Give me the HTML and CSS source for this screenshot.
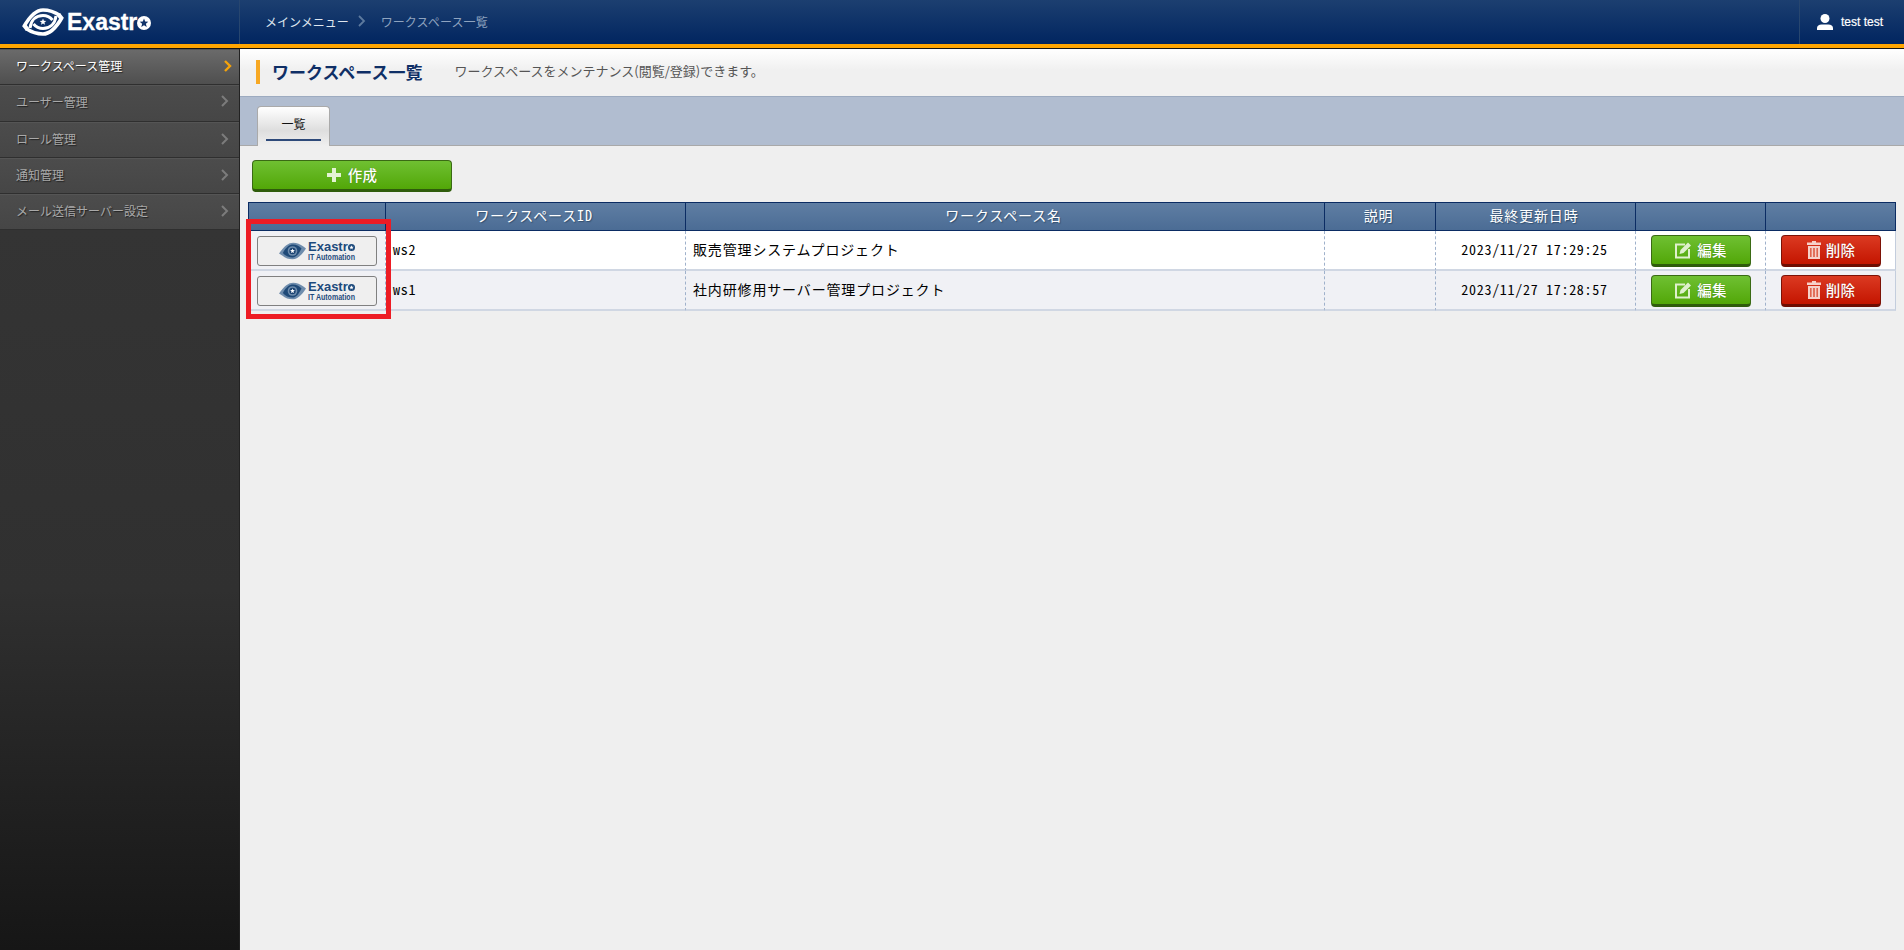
FILE: index.html
```html
<!DOCTYPE html>
<html lang="ja">
<head>
<meta charset="utf-8">
<title>ワークスペース一覧</title>
<link rel="stylesheet" href="styles.css">
</head>
<body>
<svg class="defs" width="0" height="0" aria-hidden="true">
  <defs>
    <symbol id="eye-line" viewBox="0 0 42 28">
      <g fill="none" stroke="#fff" stroke-linecap="butt">
        <path stroke-width="3.600" d="M2 18.500 C8 8 14 2 21 2 C27 2 32 3.500 38 7.500"/>
        <path stroke-width="3.600" d="M40 9.500 C34 20 28 26 21 26 C15 26 10 24.500 4 20.500"/>
        <path stroke-width="3" d="M8 20 C9 12 14 7.500 21 7.500 C25 7.500 28 9 30.500 12"/>
        <path stroke-width="3" d="M34 8 C33 16 28 20.500 21 20.500 C17 20.500 14 19 11.500 16"/>
      </g>
      <path fill="#fff" d="M0 18l4-2 3 4-3 3zM42 10l-4 2-3-4 3-3z"/>
      <polygon fill="#fff" points="21,10.500 21.900,12.800 24.300,13 22.400,14.500 23.100,16.800 21,15.500 18.900,16.800 19.600,14.500 17.700,13 20.100,12.800"/>
    </symbol>
    <symbol id="eye-fill" viewBox="0 0 42 28">
      <path fill="#6f8dad" d="M0 18 C8 6 15 1 22 1 C28 1 33 3 38 7 L42 10 C35 21 28 27 21 27 C15 27 10 25 5 21z"/>
      <path fill="#1f4a78" d="M6 17 C11 8 16 4 22 4 C27 4 31 6 35 10 C30 20 26 24 21 24 C15 24 10 22 6 17z"/>
      <circle cx="21" cy="14" r="7.500" fill="#6f8dad"/>
      <circle cx="21" cy="14" r="5" fill="#1a4372"/>
      <polygon fill="#fff" points="21,10 22,12.600 24.800,12.800 22.600,14.500 23.400,17.200 21,15.800 18.600,17.200 19.400,14.500 17.200,12.800 20,12.600"/>
    </symbol>
    <symbol id="star-white" viewBox="0 0 14 14">
      <circle cx="7" cy="7" r="7" fill="#fff"/>
      <polygon fill="#12346a" points="7,2.500 8.200,5.500 11.300,5.700 8.900,7.800 9.700,10.900 7,9.200 4.300,10.900 5.100,7.800 2.700,5.700 5.800,5.500"/>
    </symbol>
    <symbol id="star-navy" viewBox="0 0 14 14">
      <circle cx="7" cy="7" r="7" fill="#1d4a7c"/>
      <polygon fill="#fff" points="7,2.500 8.200,5.500 11.300,5.700 8.900,7.800 9.700,10.900 7,9.200 4.300,10.900 5.100,7.800 2.700,5.700 5.800,5.500"/>
    </symbol>
    <symbol id="ic-edit" viewBox="0 0 18 18">
      <path fill="none" stroke="#dff0cd" stroke-width="2" d="M11 3.500H2V16.500H15V8"/>
      <path fill="#dff0cd" d="M5.500 13l1-4L14 1.500 17 4.500 9.500 12z"/>
    </symbol>
    <symbol id="ic-trash" viewBox="0 0 14 18">
      <path fill="#f6d0c8" d="M5 0h4v1.500h5V4H0V1.500h5zM1 5h12v13H1z"/>
      <path fill="#d94a30" d="M3.200 7h1.300v9H3.200zM6.300 7h1.400v9H6.300zM9.500 7h1.300v9H9.500z"/>
    </symbol>
  </defs>
</svg>

<header class="topbar">
  <div class="brand">
    <svg class="brand-eye"><use href="#eye-line"/></svg>
    <span class="brand-name">Exastr</span>
    <svg class="brand-star"><use href="#star-white"/></svg>
  </div>
  <nav class="crumbs">
    <span class="crumb-link">メインメニュー</span>
    <svg class="crumb-sep" viewBox="0 0 8 12"><path d="M1 1l5 5-5 5" fill="none" stroke="#5d7a9e" stroke-width="1.800"/></svg>
    <span class="crumb-current">ワークスペース一覧</span>
  </nav>
  <div class="user">
    <svg class="user-icon" viewBox="0 0 16 16"><circle cx="8" cy="4.500" r="4.500" fill="#fff"/><path fill="#fff" d="M0 16v-2c0-2 2-3.500 4.500-3.500h7C14 10.500 16 12 16 14v2z"/></svg>
    <span>test test</span>
  </div>
</header>

<div class="layout">
  <aside class="sidebar">
    <a class="side-item is-active"><span>ワークスペース管理</span><svg class="chev" viewBox="0 0 8 12"><path d="M1 1l5 5-5 5" fill="none" stroke="#f5a30a" stroke-width="2.400"/></svg></a>
    <a class="side-item side-tall"><span>ユーザー管理</span><svg class="chev" viewBox="0 0 8 12"><path d="M1 1l5 5-5 5" fill="none" stroke="#7c7c7c" stroke-width="2"/></svg></a>
    <a class="side-item"><span>ロール管理</span><svg class="chev" viewBox="0 0 8 12"><path d="M1 1l5 5-5 5" fill="none" stroke="#7c7c7c" stroke-width="2"/></svg></a>
    <a class="side-item"><span>通知管理</span><svg class="chev" viewBox="0 0 8 12"><path d="M1 1l5 5-5 5" fill="none" stroke="#7c7c7c" stroke-width="2"/></svg></a>
    <a class="side-item"><span>メール送信サーバー設定</span><svg class="chev" viewBox="0 0 8 12"><path d="M1 1l5 5-5 5" fill="none" stroke="#7c7c7c" stroke-width="2"/></svg></a>
  </aside>

  <main class="content">
    <div class="title-bar">
      <h1 class="title">ワークスペース一覧</h1>
      <p class="subtitle">ワークスペースをメンテナンス(閲覧/登録)できます。</p>
    </div>
    <div class="tab-bar">
      <div class="tab"><span class="tab-label">一覧</span></div>
    </div>
    <div class="panel">
      <button class="btn btn-green btn-create">
        <svg class="ic-plus" viewBox="0 0 14 14"><path fill="#e4f3d4" d="M5 0h4v5h5v4H9v5H5V9H0V5h5z"/></svg>
        <span class="btn-text">作成</span>
      </button>
      <div class="table-wrap">
        <table class="ws-table">
          <colgroup>
            <col class="col-logo"><col class="col-id"><col class="col-name"><col class="col-desc"><col class="col-date"><col class="col-edit"><col class="col-del">
          </colgroup>
          <thead>
            <tr>
              <th></th>
              <th>ワークスペースID</th>
              <th>ワークスペース名</th>
              <th>説明</th>
              <th>最終更新日時</th>
              <th></th>
              <th></th>
            </tr>
          </thead>
          <tbody>
            <tr>
              <td><button class="btn-logo"><svg class="logo-eye"><use href="#eye-fill"/></svg><span class="logo-text"><span class="logo-top">Exastr<svg class="logo-star"><use href="#star-navy"/></svg></span><span class="logo-sub">IT Automation</span></span></button></td>
              <td class="mono">ws2</td>
              <td class="name">販売管理システムプロジェクト</td>
              <td></td>
              <td class="mono center">2023/11/27 17:29:25</td>
              <td><button class="btn btn-green btn-action"><svg class="ic-edit"><use href="#ic-edit"/></svg><span class="btn-text">編集</span></button></td>
              <td><button class="btn btn-red btn-action"><svg class="ic-trash"><use href="#ic-trash"/></svg><span class="btn-text">削除</span></button></td>
            </tr>
            <tr class="alt">
              <td><button class="btn-logo"><svg class="logo-eye"><use href="#eye-fill"/></svg><span class="logo-text"><span class="logo-top">Exastr<svg class="logo-star"><use href="#star-navy"/></svg></span><span class="logo-sub">IT Automation</span></span></button></td>
              <td class="mono">ws1</td>
              <td class="name">社内研修用サーバー管理プロジェクト</td>
              <td></td>
              <td class="mono center">2023/11/27 17:28:57</td>
              <td><button class="btn btn-green btn-action"><svg class="ic-edit"><use href="#ic-edit"/></svg><span class="btn-text">編集</span></button></td>
              <td><button class="btn btn-red btn-action"><svg class="ic-trash"><use href="#ic-trash"/></svg><span class="btn-text">削除</span></button></td>
            </tr>
          </tbody>
        </table>
        <div class="highlight"></div>
      </div>
    </div>
  </main>
</div>
</body>
</html>
```

FILE: styles.css
```css
* { box-sizing: border-box; }
html, body { margin: 0; padding: 0; height: 100%; overflow: hidden; }
body {
  font-family: "Noto Sans CJK JP", "Liberation Sans", sans-serif;
  font-size: 12px;
  background: #efefef;
  color: #000;
}
.defs { position: absolute; }

.topbar {
  display: flex;
  align-items: stretch;
  height: 48px;
  background: linear-gradient(#1c3f70, #012560);
  border-bottom: 4px solid #ffa500;
}
.brand {
  display: flex;
  align-items: center;
  width: 240px;
  padding: 0 0 0 22px;
  border-right: 1px solid #27466f;
}
.brand-eye { width: 42px; height: 28px; margin-right: 3px; }
.brand-name {
  font-family: "Liberation Sans", sans-serif;
  font-weight: 700;
  font-size: 23px;
  color: #fff;
  -webkit-text-stroke: .3px #fff;
}
.brand-star { width: 14px; height: 14px; margin-top: 2px; }
.crumbs { display: flex; align-items: center; flex: 1; padding: 0 0 2px 25px; }
.crumb-link { color: #dfe6ef; }
.crumb-sep { width: 8px; height: 12px; margin: 0 15px 0 9px; }
.crumb-current { color: #8ea3bf; letter-spacing: .1px; }
.user {
  display: flex;
  align-items: center;
  width: 105px;
  padding-left: 17px;
  border-left: 1px solid #27466f;
  font-family: "Liberation Sans", sans-serif;
  font-size: 12px;
  color: #fff;
  -webkit-text-stroke: .2px #fff;
}
.user-icon { width: 16px; height: 16px; margin-right: 8px; }

.layout { display: flex; height: 902px; border-top: 1px solid #111; }
.sidebar {
  flex: none;
  width: 240px;
  background: linear-gradient(#363636, #303030 60%, #161616);
  border-right: 1px solid #222;
}
.side-item {
  display: flex;
  align-items: center;
  justify-content: space-between;
  height: 36px;
  padding: 0 10px 2px 16px;
  background: linear-gradient(#4c4c4c, #464646);
  border-bottom: 1px solid #2f2f2f;
  box-shadow: inset 0 1px 0 #555;
  color: #a9a9a9;
  text-shadow: 1px 1px 1px #222;
}
.side-item.side-tall { height: 37px; padding-bottom: 4px; }
.side-item.is-active {
  background: linear-gradient(#6b6b6b, #4f4f4f);
  color: #fff;
  padding-right: 7px;
}
.side-item .chev { width: 8px; height: 12px; }

.content { flex: 1; min-width: 0; position: relative; }
.title-bar {
  display: flex;
  align-items: center;
  height: 47px;
  padding: 0 0 3px 16px;
  background: linear-gradient(#fff, #f0f0f0 45%);
}
.title {
  margin: 0 32px 0 0;
  padding-left: 12px;
  border-left: 4px solid #f7a823;
  font-size: 17px;
  line-height: 24px;
  font-weight: 700;
  color: #0f2f66;
  position: relative;
  top: 1px;
}
.subtitle { margin: 0 0 2px; font-size: 13px; color: #555; }

.tab-bar {
  display: flex;
  height: 50px;
  padding: 9px 0 0 17px;
  background: #b1bdd0;
  border-top: 1px solid #9dabc0;
  border-bottom: 1px solid #a9a9a9;
}
.tab {
  width: 73px;
  height: 40px;
  padding: 0 8px;
  background: linear-gradient(#fff, #dedede 60%, #efefef);
  border: 1px solid #aaa;
  border-bottom: 0;
  border-radius: 4px 4px 0 0;
  text-align: center;
}
.tab-label {
  display: block;
  height: 34px;
  line-height: 33px;
  border-bottom: 2px solid #2e4a7a;
  color: #111;
}

.panel { padding: 14px 0 0 8px; }
.btn {
  display: flex;
  align-items: center;
  justify-content: center;
  height: 32px;
  padding: 0;
  border-radius: 4px;
  color: #fff;
  font-family: inherit;
  font-size: 14.500px;
  font-weight: 500;
  letter-spacing: .3px;
  text-shadow: 0 0 1px rgba(0,0,0,.35);
}
.btn-text { position: relative; top: -1px; }
.btn-green {
  background: linear-gradient(#6fc032, #52a708);
  border: 1px solid #3a6a14;
  border-bottom: 3px solid #2f5c0c;
}
.btn-red {
  background: linear-gradient(#db3a22, #c41500);
  border: 1px solid #7c1206;
  border-bottom: 3px solid #6e0d02;
}
.btn-create { width: 200px; margin-left: 4px; gap: 7px; }
.ic-plus { width: 14px; height: 14px; }
.btn-action { width: 100px; margin: 0 auto; gap: 5px; }
.ic-edit { width: 18px; height: 18px; }
.ic-trash { width: 14px; height: 18px; }

.table-wrap { position: relative; margin-top: 10px; width: 1648px; }
.ws-table {
  table-layout: fixed;
  width: 1648px;
  border-collapse: separate;
  border-spacing: 0;
  font-size: 14px;
  font-feature-settings: "hwid";
}
.col-logo { width: 137px; }
.col-id { width: 300px; }
.col-name { width: 639px; }
.col-desc { width: 111px; }
.col-date { width: 200px; }
.col-edit { width: 130px; }
.col-del { width: 131px; }
.ws-table th {
  height: 29px;
  padding: 0 3px 3px 0;
  background: linear-gradient(#5f7ea3, #4b6c95);
  border-top: 1px solid #0b2c63;
  border-bottom: 1px solid #0b2c63;
  border-left: 1px solid #0b2c63;
  color: #fff;
  font-weight: 400;
  letter-spacing: .85px;
  text-shadow: 1px 1px 1px #33506f;
}
.ws-table th:last-child { border-right: 1px solid #0b2c63; }
.ws-table td {
  height: 40px;
  padding: 4px 0 0;
  vertical-align: top;
  background: #fff;
  border-bottom: 2px solid #d0d7e3;
  border-left: 1px dashed #9fb1cb;
}
.ws-table td:first-child { border-left: 1px solid #c3cddd; background: #f0f1f5; }
.ws-table td:last-child { border-right: 1px solid #c3cddd; padding-left: 1px; }
.ws-table .alt td { background: #f0f1f5; }
.ws-table td.name,
.ws-table td.mono {
  padding: 0 0 2px 7px;
  vertical-align: middle;
  letter-spacing: .85px;
}
.ws-table td.mono { letter-spacing: .7px; }
.ws-table td.center { padding: 0 2px 2px 0; text-align: center; }

.btn-logo {
  display: flex;
  align-items: center;
  width: 120px;
  height: 30px;
  margin: 1px 0 0 8px;
  padding: 0 0 0 21px;
  background: #efefef;
  border: 1px solid #808080;
  border-radius: 3px;
  font-family: "Liberation Sans", sans-serif;
  color: #1d4a7c;
}
.logo-eye { width: 27px; height: 18px; margin-right: 2px; }
.logo-text { display: flex; flex-direction: column; align-items: flex-start; padding-top: 1px; }
.logo-top {
  display: flex;
  align-items: center;
  font-weight: 700;
  font-size: 13px;
  line-height: 12px;
}
.logo-star { width: 7px; height: 7px; margin-top: 1px; }
.logo-sub {
  font-weight: 700;
  font-size: 9px;
  line-height: 9px;
  white-space: nowrap;
  transform: scaleX(.78);
  transform-origin: left center;
}

.highlight {
  position: absolute;
  left: -2px;
  top: 17px;
  width: 145px;
  height: 100px;
  border: 5px solid #ed1c24;
  pointer-events: none;
}
```
